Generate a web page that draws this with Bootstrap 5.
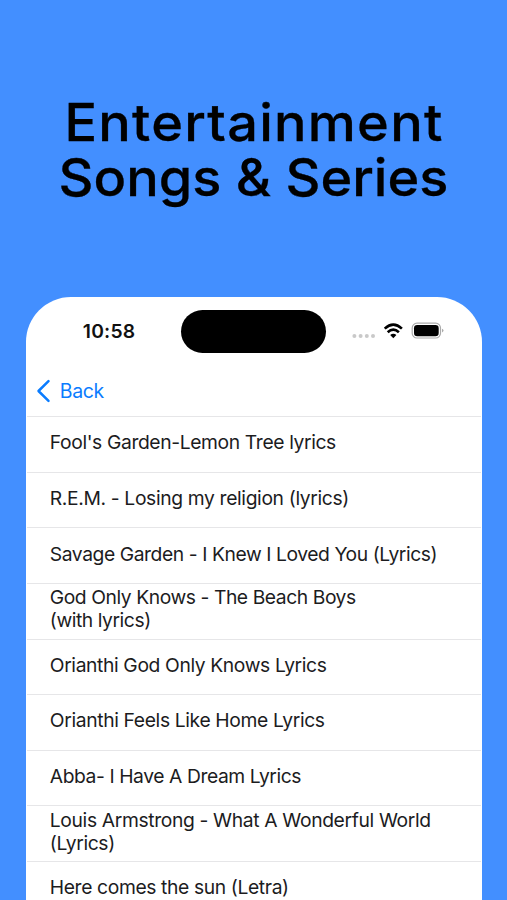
<!DOCTYPE html>
<html lang="en"><head><meta charset="utf-8"><title>Entertainment Songs &amp; Series</title>
<meta name="viewport" content="width=device-width, initial-scale=1">
<link href="https://cdn.jsdelivr.net/npm/bootstrap@5.3.0/dist/css/bootstrap.min.css" rel="stylesheet">
<style>
body{background:#438fff;font-family:Inter,"Liberation Sans",sans-serif;height:900px;overflow:hidden}
.headline{height:297px;padding-top:95px;font-size:52px;line-height:55px;font-weight:500;color:#000;-webkit-text-stroke:.3px #000}
.headline span{display:block;transform:scaleX(1.04)}
.headline span:first-child{letter-spacing:1.2px;padding-left:1px}
.phone{width:455.5px;height:603px;margin-left:26.3px;border-radius:45px 45px 0 0;background:#fff;overflow:hidden}
.statusbar{height:68px;padding:13px 38px 0 56.5px}
.clock{font-size:19.3px;font-weight:600;line-height:43px;letter-spacing:.2px;width:98.7px;color:#111}
.island{width:145px;height:43px;background:#000;flex:none}
.signals{padding-left:26px;height:42px}
.backbar{height:51px;padding-left:10px;color:#0a7cff;font-size:19.5px;letter-spacing:-.4px}
.backbar span{padding:2px 0 0 .5px}
.songs{margin:0 1px}
.song{height:55.65px;border-top:1px solid #e6e6e8;padding-left:22.5px;padding-bottom:3.4px;font-size:19.3px;line-height:23px;letter-spacing:-.38px;color:#1c1c1e}
.song:nth-child(2),.song:nth-child(6),.song:nth-child(8){letter-spacing:-.36px}
.song:nth-child(3),.song:nth-child(7){letter-spacing:-.43px}
.song:nth-child(3){padding-bottom:2.6px}
.song:nth-child(4){letter-spacing:-.44px;padding-bottom:5px}
</style></head><body>
<h1 class="headline text-center mb-0"><span>Entertainment</span><span>Songs &amp; Series</span></h1>
<main class="phone">
<div class="statusbar d-flex"><div class="clock">10:58</div><div class="island rounded-pill"></div>
<div class="signals d-flex align-items-center">
<svg width="92" height="42" viewBox="0 0 92 42"><g fill="#c9c9c9"><circle cx="2.4" cy="26" r="2"/><circle cx="8.6" cy="26" r="2"/><circle cx="14.8" cy="26" r="2"/><circle cx="21" cy="26" r="2"/></g>
<g fill="none" stroke="#000" stroke-width="2.6"><path d="M32.7 18.6Q41.3 10.6 49.9 18.6M35.7 22.2Q41.3 17 46.9 22.2"/></g><path d="M41.3 28.2L38.2 25.1Q41.3 22.4 44.4 25.1Z"/>
<rect x="60.2" y="13.2" width="28.3" height="14.8" rx="4.8" fill="#fff" stroke="#aaa" stroke-width="1.2"/><rect x="62" y="15" width="24.7" height="11.2" rx="3.2"/><path d="M90 18.8q1.5.5 1.5 1.8t-1.5 1.8z" fill="#aaa"/></svg></div></div>
<div class="backbar d-flex align-items-center"><svg class="me-2" width="15" height="24" viewBox="0 0 15 24"><path d="M12.5 2.2L2.5 12L12.5 21.8" fill="none" stroke="#0a7cff" stroke-width="2.5" stroke-linecap="round" stroke-linejoin="round"/></svg><span>Back</span></div>
<div class="songs">
<div class="song d-flex align-items-center">Fool's Garden-Lemon Tree lyrics</div>
<div class="song d-flex align-items-center">R.E.M. - Losing my religion (lyrics)</div>
<div class="song d-flex align-items-center">Savage Garden - I Knew I Loved You (Lyrics)</div>
<div class="song d-flex align-items-center"><span>God Only Knows - The Beach Boys<br>(with lyrics)</span></div>
<div class="song d-flex align-items-center">Orianthi God Only Knows Lyrics</div>
<div class="song d-flex align-items-center">Orianthi Feels Like Home Lyrics</div>
<div class="song d-flex align-items-center">Abba- I Have A Dream Lyrics</div>
<div class="song d-flex align-items-center"><span>Louis Armstrong - What A Wonderful World<br>(Lyrics)</span></div>
<div class="song d-flex align-items-center">Here comes the sun (Letra)</div>
</div></main>
<script src="https://cdn.jsdelivr.net/npm/bootstrap@5.3.0/dist/js/bootstrap.bundle.min.js"></script>
</body></html>
